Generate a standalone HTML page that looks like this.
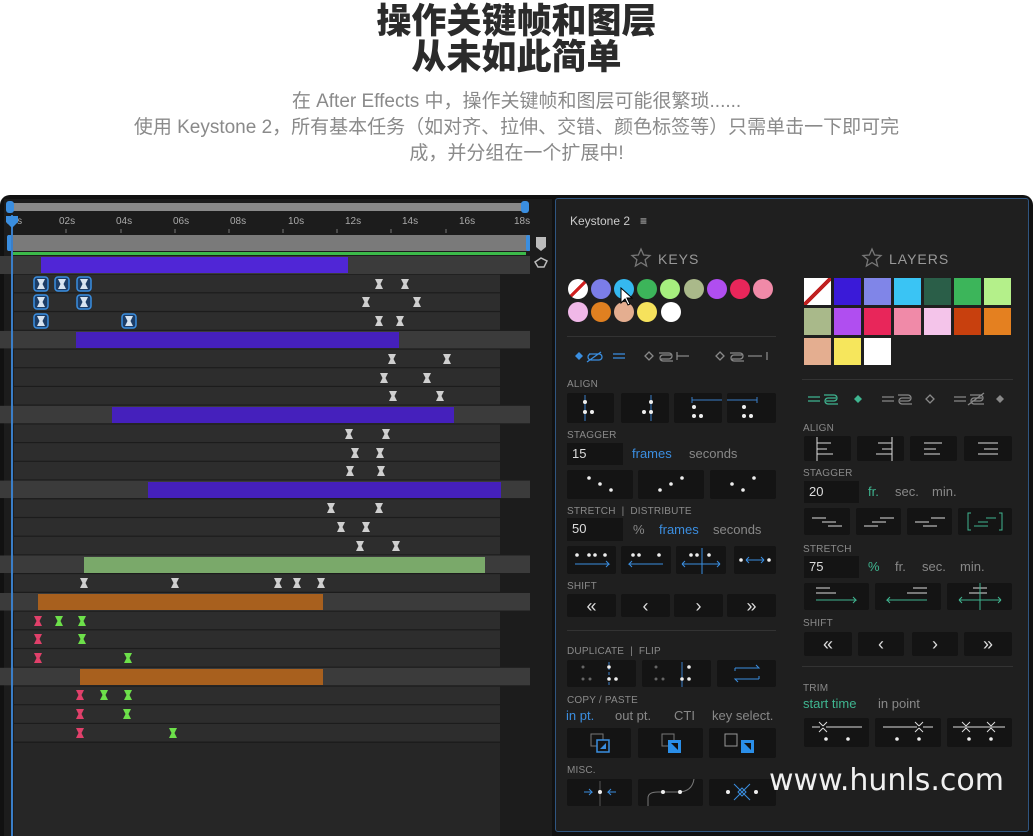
<!DOCTYPE html>
<html><head><meta charset="utf-8">
<style>
*{margin:0;padding:0;box-sizing:border-box}
body{width:1033px;height:836px;background:#fff;position:relative;overflow:hidden;font-family:"Liberation Sans","Noto Sans CJK SC",sans-serif}
.a{position:absolute}
.h{left:0;width:1033px;text-align:center;font-weight:900;font-size:35px;color:#2b2b2b;line-height:38px;font-family:"Noto Sans CJK SC",sans-serif}
.s{left:0;width:1033px;text-align:center;font-size:19px;color:#8a8a8a;line-height:26px;font-family:"Liberation Sans Narrow","Liberation Sans","Noto Sans CJK SC",sans-serif}
.lbl{font-size:10px;color:#8a8a8a;letter-spacing:.2px}
.b{position:absolute;background:#141414;border-radius:2px}
.b svg{position:absolute;left:0;top:0;width:100%;height:100%}
.inp{position:absolute;background:#141414;color:#ddd;font-size:13px;padding:3px 0 0 5px}
.t{position:absolute;font-size:13px;color:#888}
.bl{color:#3b8ee0}.gr{color:#3fb590}
.c{position:absolute;width:20px;height:20px;border-radius:50%}
.q{position:absolute;width:27px;height:27px}
.sh{font-size:18px;color:#ddd;text-align:center;line-height:24px}
</style></head><body>
<div class="a h" style="top:0">操作关键帧和图层</div>
<div class="a h" style="top:36px">从未如此简单</div>
<div class="a s" style="top:89px">在 After Effects 中，操作关键帧和图层可能很繁琐......</div>
<div class="a s" style="top:115px">使用 Keystone 2，所有基本任务（如对齐、拉伸、交错、颜色标签等）只需单击一下即可完</div>
<div class="a s" style="top:141px">成，并分组在一个扩展中!</div>

<div class="a" style="left:0;top:195px;width:1033px;height:641px;background:#111;border-radius:10px 10px 0 0"></div>

<svg class="a" style="left:0;top:0" width="552" height="836" viewBox="0 0 552 836">
<defs>
<path id="k" d="M-4,-5h8l-2.5,5l2.5,5h-8l2.5,-5z" fill="#cfcfcf"/>
<g id="kb"><rect x="-7" y="-7" width="14" height="14" rx="3" fill="#1d3d66" stroke="#3a8ee0" stroke-width="1.5"/><path d="M-4,-5h8l-2.5,5l2.5,5h-8l2.5,-5z" fill="#d8e4f0"/></g>
<path id="kp" d="M-4,-5h8l-2.5,5l2.5,5h-8l2.5,-5z" fill="#e0406a"/>
<path id="kg" d="M-4,-5h8l-2.5,5l2.5,5h-8l2.5,-5z" fill="#6de04a"/>
</defs>
<rect x="4" y="199" width="548" height="637" fill="#1c1c1c"/>
<rect x="10" y="203" width="515" height="8" fill="#8a8a8a"/>
<rect x="6" y="201" width="8" height="12" rx="3" fill="#3a8ee0"/><rect x="521" y="201" width="8" height="12" rx="3" fill="#3a8ee0"/>
<g font-size="10" fill="#aaa" font-family="Liberation Sans">
<text x="6" y="224">00s</text><text x="59" y="224">02s</text><text x="116" y="224">04s</text><text x="173" y="224">06s</text><text x="230" y="224">08s</text><text x="288" y="224">10s</text><text x="345" y="224">12s</text><text x="402" y="224">14s</text><text x="459" y="224">16s</text><text x="514" y="224">18s</text>
</g>
<g stroke="#777"><path d="M66 229v4M121 229v4M175 229v4M229 229v4M283 229v4M337 229v4M391 229v4M446 229v4"/></g>
<rect x="8" y="235" width="522" height="16" fill="#7a7a7a"/>
<rect x="7" y="235" width="5" height="16" rx="2" fill="#3a8ee0"/><rect x="526" y="235" width="4" height="16" rx="2" fill="#3a8ee0"/>
<rect x="12" y="252" width="514" height="3" fill="#3cba4a"/>
<path d="M536 237h10v10l-5 4-5-4z" fill="#bbb"/>
<path d="M535 262l6-4 6 3-3 6h-6z" fill="none" stroke="#bbb" stroke-width="1.5"/>
<g>
<rect x="0" y="256" width="530" height="18" fill="#3b3b3b"/>
<rect x="14" y="274.7" width="486" height="17.5" fill="#2d2d2d"/>
<rect x="14" y="293.4" width="486" height="17.5" fill="#2d2d2d"/>
<rect x="14" y="312.2" width="486" height="17.5" fill="#2d2d2d"/>
<rect x="0" y="330.9" width="530" height="17.5" fill="#3b3b3b"/>
<rect x="14" y="349.6" width="486" height="17.5" fill="#2d2d2d"/>
<rect x="14" y="368.3" width="486" height="17.5" fill="#2d2d2d"/>
<rect x="14" y="387" width="486" height="17.5" fill="#2d2d2d"/>
<rect x="0" y="405.8" width="530" height="17.5" fill="#3b3b3b"/>
<rect x="14" y="424.5" width="486" height="17.5" fill="#2d2d2d"/>
<rect x="14" y="443.2" width="486" height="17.5" fill="#2d2d2d"/>
<rect x="14" y="461.9" width="486" height="17.5" fill="#2d2d2d"/>
<rect x="0" y="480.6" width="530" height="17.5" fill="#3b3b3b"/>
<rect x="14" y="499.4" width="486" height="17.5" fill="#2d2d2d"/>
<rect x="14" y="518.1" width="486" height="17.5" fill="#2d2d2d"/>
<rect x="14" y="536.8" width="486" height="17.5" fill="#2d2d2d"/>
<rect x="0" y="555.5" width="530" height="17.5" fill="#3b3b3b"/>
<rect x="14" y="574.2" width="486" height="17.5" fill="#2d2d2d"/>
<rect x="0" y="593" width="530" height="17.5" fill="#3b3b3b"/>
<rect x="14" y="611.7" width="486" height="17.5" fill="#2d2d2d"/>
<rect x="14" y="630.4" width="486" height="17.5" fill="#2d2d2d"/>
<rect x="14" y="649.1" width="486" height="17.5" fill="#2d2d2d"/>
<rect x="0" y="667.8" width="530" height="17.5" fill="#3b3b3b"/>
<rect x="14" y="686.6" width="486" height="17.5" fill="#2d2d2d"/>
<rect x="14" y="705.3" width="486" height="17.5" fill="#2d2d2d"/>
<rect x="14" y="724" width="486" height="17.5" fill="#2d2d2d"/>
<rect x="14" y="743" width="486" height="93" fill="#262626"/>
</g>
<rect x="41" y="257" width="307" height="16" fill="#5026d6"/>
<rect x="76" y="332" width="323" height="16" fill="#4520bc"/>
<rect x="112" y="407" width="342" height="16" fill="#4520bc"/>
<rect x="148" y="482" width="353" height="16" fill="#4520bc"/>
<rect x="84" y="557" width="401" height="16" fill="#7aa96a"/>
<rect x="38" y="594" width="285" height="16" fill="#a8601e"/>
<rect x="80" y="669" width="243" height="16" fill="#a8601e"/>
<rect x="11" y="215" width="2" height="621" fill="#3a7ec8"/>
<path d="M6 216h12v6l-6 6-6-6z" fill="#3a8ee0"/>
<use href="#kb" x="41" y="284"/><use href="#kb" x="62" y="284"/><use href="#kb" x="84" y="284"/><use href="#k" x="379" y="284"/><use href="#k" x="405" y="284"/>
<use href="#kb" x="41" y="302"/><use href="#kb" x="84" y="302"/><use href="#k" x="366" y="302"/><use href="#k" x="417" y="302"/>
<use href="#kb" x="41" y="321"/><use href="#kb" x="129" y="321"/><use href="#k" x="379" y="321"/><use href="#k" x="400" y="321"/>
<use href="#k" x="392" y="359"/><use href="#k" x="447" y="359"/>
<use href="#k" x="384" y="378"/><use href="#k" x="427" y="378"/>
<use href="#k" x="393" y="396"/><use href="#k" x="440" y="396"/>
<use href="#k" x="349" y="434"/><use href="#k" x="386" y="434"/>
<use href="#k" x="355" y="453"/><use href="#k" x="380" y="453"/>
<use href="#k" x="350" y="471"/><use href="#k" x="381" y="471"/>
<use href="#k" x="331" y="508"/><use href="#k" x="379" y="508"/>
<use href="#k" x="341" y="527"/><use href="#k" x="366" y="527"/>
<use href="#k" x="360" y="546"/><use href="#k" x="396" y="546"/>
<use href="#k" x="84" y="583"/><use href="#k" x="175" y="583"/><use href="#k" x="278" y="583"/><use href="#k" x="297" y="583"/><use href="#k" x="321" y="583"/>
<use href="#kp" x="38" y="621"/><use href="#kg" x="59" y="621"/><use href="#kg" x="82" y="621"/>
<use href="#kp" x="38" y="639"/><use href="#kg" x="82" y="639"/>
<use href="#kp" x="38" y="658"/><use href="#kg" x="128" y="658"/>
<use href="#kp" x="80" y="695"/><use href="#kg" x="104" y="695"/><use href="#kg" x="128" y="695"/>
<use href="#kp" x="80" y="714"/><use href="#kg" x="127" y="714"/>
<use href="#kp" x="80" y="733"/><use href="#kg" x="173" y="733"/>
</svg>

<div class="a" style="left:555px;top:198px;width:474px;height:634px;background:#1f1f1f;border:1px solid #2f5580;border-radius:3px"></div>
<div class="a" style="left:570px;top:214px;font-size:12px;color:#ccc">Keystone 2 &nbsp; ≡</div>
<svg class="a" style="left:630px;top:247px" width="22" height="22" viewBox="0 0 22 22"><path d="M11 2l2.6 6 6.4.5-4.9 4.2 1.5 6.3L11 15.6 5.4 19l1.5-6.3L2 8.5 8.4 8z" fill="none" stroke="#777" stroke-width="1.3"/></svg>
<div class="a" style="left:658px;top:251px;font-size:14px;color:#999;letter-spacing:1px">KEYS</div>
<svg class="a" style="left:861px;top:247px" width="22" height="22" viewBox="0 0 22 22"><path d="M11 2l2.6 6 6.4.5-4.9 4.2 1.5 6.3L11 15.6 5.4 19l1.5-6.3L2 8.5 8.4 8z" fill="none" stroke="#777" stroke-width="1.3"/></svg>
<div class="a" style="left:889px;top:251px;font-size:14px;color:#999;letter-spacing:1px">LAYERS</div>

<div class="c" style="left:568px;top:279px;background:linear-gradient(135deg,#fff 44%,#d02020 44%,#d02020 56%,#fff 56%)"></div>
<div class="c" style="left:591px;top:279px;background:#7b7de8"></div>
<div class="c" style="left:614px;top:279px;background:#35b8f0"></div>
<div class="c" style="left:637px;top:279px;background:#3cb55a"></div>
<div class="c" style="left:660px;top:279px;background:#a6ef7e"></div>
<div class="c" style="left:684px;top:279px;background:#aab98a"></div>
<div class="c" style="left:707px;top:279px;background:#b04ef0"></div>
<div class="c" style="left:730px;top:279px;background:#e8265a"></div>
<div class="c" style="left:753px;top:279px;background:#f08aa8"></div>
<div class="c" style="left:568px;top:302px;background:#f0b8e8"></div>
<div class="c" style="left:591px;top:302px;background:#e08020"></div>
<div class="c" style="left:614px;top:302px;background:#e4ae90"></div>
<div class="c" style="left:637px;top:302px;background:#f6e25c"></div>
<div class="c" style="left:661px;top:302px;background:#fff"></div>
<svg class="a" style="left:620px;top:287px" width="14" height="20" viewBox="0 0 14 20"><path d="M1 1v15l4-4 3 6 2-1-3-6h5z" fill="#fff" stroke="#000"/></svg>

<div class="q" style="left:804px;top:278px;background:linear-gradient(135deg,#fff 45%,#c02020 45%,#c02020 55%,#fff 55%)"></div>
<div class="q" style="left:834px;top:278px;background:#3a1ad8"></div>
<div class="q" style="left:864px;top:278px;background:#8085e8"></div>
<div class="q" style="left:894px;top:278px;background:#3ac4f4"></div>
<div class="q" style="left:924px;top:278px;background:#2a5e48"></div>
<div class="q" style="left:954px;top:278px;background:#3cb55a"></div>
<div class="q" style="left:984px;top:278px;background:#b4f08a"></div>
<div class="q" style="left:804px;top:308px;background:#a9b98a"></div>
<div class="q" style="left:834px;top:308px;background:#b04ef0"></div>
<div class="q" style="left:864px;top:308px;background:#e8265a"></div>
<div class="q" style="left:894px;top:308px;background:#f08aa8"></div>
<div class="q" style="left:924px;top:308px;background:#f4c4ea"></div>
<div class="q" style="left:954px;top:308px;background:#c8400e"></div>
<div class="q" style="left:984px;top:308px;background:#e48020"></div>
<div class="q" style="left:804px;top:338px;background:#e4ae90"></div>
<div class="q" style="left:834px;top:338px;background:#f6e65c"></div>
<div class="q" style="left:864px;top:338px;background:#fff"></div>

<div class="a" style="left:567px;top:336px;width:209px;height:1px;background:#333"></div>
<div class="a" style="left:802px;top:379px;width:211px;height:1px;background:#333"></div>
<div class="a" style="left:567px;top:630px;width:209px;height:1px;background:#333"></div>
<div class="a" style="left:802px;top:666px;width:211px;height:1px;background:#333"></div>

<svg class="a" style="left:567px;top:346px" width="210" height="20" viewBox="0 0 210 20" fill="none" stroke-width="1.3">
<path d="M12 6l4 4-4 4-4-4z" fill="#3a8ee0"/><g stroke="#3a8ee0"><path d="M22 8h10a3 3 0 010 6h-8a3 3 0 010-6M20 16l14-10M46 8h12M46 12h12"/></g>
<g stroke="#888"><path d="M82 6l4 4-4 4-4-4zM92 7h10a3 3 0 010 6h-8M104 9h-8a3 3 0 000 6h10M110 10h12M110 6v8"/>
<path d="M153 6l4 4-4 4-4-4zM163 7h10a3 3 0 010 6h-8M175 9h-8a3 3 0 000 6h10M181 10h14M200 6v8"/></g>
</svg>
<svg class="a" style="left:804px;top:389px" width="210" height="20" viewBox="0 0 210 20" fill="none" stroke-width="1.3">
<g stroke="#3fb590"><path d="M4 8h12M4 12h12M20 6h10a3 3 0 010 6h-8M32 9h-8a3 3 0 000 6h10"/></g><path d="M54 6l4 4-4 4-4-4z" fill="#3fb590"/>
<g stroke="#888"><path d="M78 8h12M78 12h12M94 6h10a3 3 0 010 6h-8M106 9h-8a3 3 0 000 6h10M126 6l4 4-4 4-4-4zM150 8h12M150 12h12M166 6h10a3 3 0 010 6h-8M178 9h-8a3 3 0 000 6h10M164 16l16-12"/></g><path d="M196 6l4 4-4 4-4-4z" fill="#888"/>
</svg>

<div class="a lbl" style="left:567px;top:379px">ALIGN</div>
<div class="b" style="left:567px;top:393px;width:47px;height:30px"><svg viewBox="0 0 47 30"><path d="M18 2v26" stroke="#3a7ec8"/><g fill="#eee"><circle cx="18" cy="9" r="2"/><circle cx="18" cy="19" r="2"/><circle cx="25" cy="19" r="2"/></g></svg></div>
<div class="b" style="left:621px;top:393px;width:48px;height:30px"><svg viewBox="0 0 48 30"><path d="M30 2v26" stroke="#3a7ec8"/><g fill="#eee"><circle cx="30" cy="9" r="2"/><circle cx="30" cy="19" r="2"/><circle cx="23" cy="19" r="2"/></g></svg></div>
<div class="b" style="left:674px;top:393px;width:48px;height:30px"><svg viewBox="0 0 48 30"><path d="M18 7h32M18 4v6" stroke="#3a7ec8"/><g fill="#eee"><circle cx="20" cy="14" r="2"/><circle cx="20" cy="23" r="2"/><circle cx="27" cy="23" r="2"/></g></svg></div>
<div class="b" style="left:727px;top:393px;width:49px;height:30px"><svg viewBox="0 0 49 30"><path d="M0 7h30M30 4v6" stroke="#3a7ec8"/><g fill="#eee"><circle cx="17" cy="14" r="2"/><circle cx="17" cy="23" r="2"/><circle cx="24" cy="23" r="2"/></g></svg></div>

<div class="a lbl" style="left:567px;top:430px">STAGGER</div>
<div class="inp" style="left:567px;top:443px;width:56px;height:22px">15</div>
<div class="t bl" style="left:632px;top:446px">frames</div>
<div class="t" style="left:689px;top:446px">seconds</div>
<div class="b" style="left:567px;top:470px;width:66px;height:29px"><svg viewBox="0 0 66 29"><g fill="#eee"><circle cx="22" cy="8" r="1.8"/><circle cx="33" cy="14" r="1.8"/><circle cx="44" cy="20" r="1.8"/></g></svg></div>
<div class="b" style="left:638px;top:470px;width:66px;height:29px"><svg viewBox="0 0 66 29"><g fill="#eee"><circle cx="22" cy="20" r="1.8"/><circle cx="33" cy="14" r="1.8"/><circle cx="44" cy="8" r="1.8"/></g></svg></div>
<div class="b" style="left:710px;top:470px;width:66px;height:29px"><svg viewBox="0 0 66 29"><g fill="#eee"><circle cx="22" cy="14" r="1.8"/><circle cx="33" cy="20" r="1.8"/><circle cx="44" cy="8" r="1.8"/></g></svg></div>

<div class="a lbl" style="left:567px;top:506px">STRETCH &nbsp;| &nbsp;DISTRIBUTE</div>
<div class="inp" style="left:567px;top:518px;width:56px;height:23px">50</div>
<div class="t" style="left:633px;top:522px">%</div>
<div class="t bl" style="left:659px;top:522px">frames</div>
<div class="t" style="left:713px;top:522px">seconds</div>
<div class="b" style="left:567px;top:546px;width:49px;height:28px"><svg viewBox="0 0 49 28"><g fill="#eee"><circle cx="10" cy="9" r="1.8"/><circle cx="22" cy="9" r="1.8"/><circle cx="28" cy="9" r="1.8"/><circle cx="38" cy="9" r="1.8"/></g><path d="M8 18h34l-3-3M42 18l-3 3" stroke="#3a8ee0" fill="none"/></svg></div>
<div class="b" style="left:621px;top:546px;width:50px;height:28px"><svg viewBox="0 0 50 28"><g fill="#eee"><circle cx="12" cy="9" r="1.8"/><circle cx="18" cy="9" r="1.8"/><circle cx="38" cy="9" r="1.8"/></g><path d="M42 18H8l3-3M8 18l3 3" stroke="#3a8ee0" fill="none"/></svg></div>
<div class="b" style="left:676px;top:546px;width:50px;height:28px"><svg viewBox="0 0 50 28"><g fill="#eee"><circle cx="15" cy="9" r="1.8"/><circle cx="21" cy="9" r="1.8"/><circle cx="33" cy="9" r="1.8"/></g><path d="M26 2v26M6 18h38M6 18l3-3M6 18l3 3M44 18l-3-3M44 18l-3 3" stroke="#3a8ee0" fill="none"/></svg></div>
<div class="b" style="left:734px;top:546px;width:42px;height:28px"><svg viewBox="0 0 42 28"><g fill="#eee"><circle cx="7" cy="14" r="1.8"/><circle cx="35" cy="14" r="1.8"/></g><path d="M12 14h18M12 14l3-3M12 14l3 3M30 14l-3-3M30 14l-3 3" stroke="#3a8ee0" fill="none"/></svg></div>

<div class="a lbl" style="left:567px;top:581px">SHIFT</div>
<div class="b sh" style="left:567px;top:594px;width:49px;height:23px">«</div>
<div class="b sh" style="left:621px;top:594px;width:49px;height:23px">‹</div>
<div class="b sh" style="left:674px;top:594px;width:49px;height:23px">›</div>
<div class="b sh" style="left:727px;top:594px;width:49px;height:23px">»</div>

<div class="a lbl" style="left:567px;top:646px">DUPLICATE &nbsp;| &nbsp;FLIP</div>
<div class="b" style="left:567px;top:660px;width:69px;height:27px"><svg viewBox="0 0 69 27"><path d="M42 2v25" stroke="#3a7ec8" stroke-dasharray="3 2"/><g fill="#666"><circle cx="16" cy="7" r="1.5"/><circle cx="16" cy="19" r="1.5"/><circle cx="23" cy="19" r="1.5"/></g><g fill="#eee"><circle cx="42" cy="7" r="1.8"/><circle cx="42" cy="19" r="1.8"/><circle cx="49" cy="19" r="1.8"/></g></svg></div>
<div class="b" style="left:642px;top:660px;width:69px;height:27px"><svg viewBox="0 0 69 27"><path d="M40 2v25" stroke="#3a7ec8"/><g fill="#666"><circle cx="14" cy="7" r="1.5"/><circle cx="14" cy="19" r="1.5"/><circle cx="21" cy="19" r="1.5"/></g><g fill="#eee"><circle cx="47" cy="7" r="1.8"/><circle cx="40" cy="19" r="1.8"/><circle cx="47" cy="19" r="1.8"/></g></svg></div>
<div class="b" style="left:717px;top:660px;width:59px;height:27px"><svg viewBox="0 0 59 27"><path d="M18 8h24l-3-3M18 8v3M42 19H18l3 3M42 19v-3" stroke="#3a8ee0" fill="none"/></svg></div>

<div class="a lbl" style="left:567px;top:695px">COPY / PASTE</div>
<div class="t bl" style="left:566px;top:708px">in pt.</div>
<div class="t" style="left:615px;top:708px">out pt.</div>
<div class="t" style="left:674px;top:708px">CTI</div>
<div class="t" style="left:712px;top:708px">key select.</div>
<div class="b" style="left:567px;top:728px;width:64px;height:30px"><svg viewBox="0 0 64 30"><rect x="24" y="6" width="12" height="12" fill="none" stroke="#777"/><rect x="30" y="12" width="12" height="12" fill="#141414" stroke="#3a8ee0" stroke-width="1.5"/><path d="M39 15v6h-6z" fill="#3a8ee0"/></svg></div>
<div class="b" style="left:638px;top:728px;width:65px;height:30px"><svg viewBox="0 0 65 30"><rect x="24" y="6" width="12" height="12" fill="none" stroke="#777"/><rect x="30" y="12" width="13" height="13" fill="#2a8ee8"/><path d="M33 15h7v7z" fill="#111"/></svg></div>
<div class="b" style="left:709px;top:728px;width:67px;height:30px"><svg viewBox="0 0 67 30"><rect x="16" y="6" width="12" height="12" fill="none" stroke="#999"/><rect x="32" y="12" width="13" height="13" fill="#2a8ee8"/><path d="M35 15h7v7z" fill="#111"/></svg></div>

<div class="a lbl" style="left:567px;top:765px">MISC.</div>
<div class="b" style="left:567px;top:779px;width:65px;height:27px"><svg viewBox="0 0 65 27"><path d="M33 2v25" stroke="#555"/><path d="M17 13h8l-3-3M25 13l-3 3M49 13h-8l3-3M41 13l3 3" stroke="#3a8ee0" fill="none"/><circle cx="33" cy="13" r="2" fill="#eee"/></svg></div>
<div class="b" style="left:638px;top:779px;width:65px;height:27px"><svg viewBox="0 0 65 27"><path d="M10 27v-8q0-6 10-6h20q14 0 16-13" stroke="#777" fill="none"/><circle cx="25" cy="13" r="2" fill="#eee"/><circle cx="42" cy="13" r="2" fill="#eee"/></svg></div>
<div class="b" style="left:709px;top:779px;width:67px;height:27px"><svg viewBox="0 0 67 27"><path d="M25 5l16 16M41 5L25 21" stroke="#3a8ee0"/><path d="M33 9l4 4-4 4-4-4z" fill="none" stroke="#3a8ee0"/><circle cx="19" cy="13" r="2" fill="#eee"/><circle cx="47" cy="13" r="2" fill="#eee"/></svg></div>

<div class="a lbl" style="left:803px;top:423px">ALIGN</div>
<div class="b" style="left:804px;top:436px;width:47px;height:25px"><svg viewBox="0 0 47 25"><path d="M13 1v24M13 7h14M13 13h10M13 18h16" stroke="#ddd" fill="none"/></svg></div>
<div class="b" style="left:857px;top:436px;width:47px;height:25px"><svg viewBox="0 0 47 25"><path d="M35 1v24M21 7h14M25 13h10M19 18h16" stroke="#ddd" fill="none"/></svg></div>
<div class="b" style="left:910px;top:436px;width:47px;height:25px"><svg viewBox="0 0 47 25"><path d="M14 7h18M14 13h12M14 18h16" stroke="#ddd" fill="none"/></svg></div>
<div class="b" style="left:964px;top:436px;width:48px;height:25px"><svg viewBox="0 0 48 25"><path d="M14 7h20M20 13h14M14 18h20" stroke="#ddd" fill="none"/></svg></div>

<div class="a lbl" style="left:803px;top:468px">STAGGER</div>
<div class="inp" style="left:804px;top:481px;width:55px;height:22px">20</div>
<div class="t gr" style="left:868px;top:484px">fr.</div>
<div class="t" style="left:895px;top:484px">sec.</div>
<div class="t" style="left:932px;top:484px">min.</div>
<div class="b" style="left:804px;top:508px;width:46px;height:27px"><svg viewBox="0 0 46 27"><path d="M8 10h14M18 14h14M24 18h14" stroke="#ddd"/></svg></div>
<div class="b" style="left:856px;top:508px;width:45px;height:27px"><svg viewBox="0 0 45 27"><path d="M24 10h14M16 14h14M8 18h14" stroke="#ddd"/></svg></div>
<div class="b" style="left:907px;top:508px;width:45px;height:27px"><svg viewBox="0 0 45 27"><path d="M24 10h14M8 14h14M16 18h14" stroke="#ddd"/></svg></div>
<div class="b" style="left:958px;top:508px;width:54px;height:27px"><svg viewBox="0 0 54 27"><path d="M13 5h-3v17h3M41 5h3v17h-3M28 10h10M20 14h10M16 18h14" stroke="#3fb590" fill="none"/></svg></div>

<div class="a lbl" style="left:803px;top:544px">STRETCH</div>
<div class="inp" style="left:804px;top:556px;width:55px;height:22px">75</div>
<div class="t gr" style="left:868px;top:559px">%</div>
<div class="t" style="left:895px;top:559px">fr.</div>
<div class="t" style="left:922px;top:559px">sec.</div>
<div class="t" style="left:960px;top:559px">min.</div>
<div class="b" style="left:804px;top:583px;width:65px;height:27px"><svg viewBox="0 0 65 27"><path d="M12 5h14M12 10h20" stroke="#ddd"/><path d="M12 17h40l-3-3M52 17l-3 3" stroke="#3fb590" fill="none"/></svg></div>
<div class="b" style="left:875px;top:583px;width:66px;height:27px"><svg viewBox="0 0 66 27"><path d="M38 5h14M32 10h20" stroke="#ddd"/><path d="M52 17H12l3-3M12 17l3 3" stroke="#3fb590" fill="none"/></svg></div>
<div class="b" style="left:947px;top:583px;width:65px;height:27px"><svg viewBox="0 0 65 27"><path d="M26 5h14M22 10h18" stroke="#ddd"/><path d="M33 0v27M12 17h42M12 17l3-3M12 17l3 3M54 17l-3-3M54 17l-3 3" stroke="#3fb590" fill="none"/></svg></div>

<div class="a lbl" style="left:803px;top:618px">SHIFT</div>
<div class="b sh" style="left:804px;top:632px;width:48px;height:24px">«</div>
<div class="b sh" style="left:858px;top:632px;width:46px;height:24px">‹</div>
<div class="b sh" style="left:912px;top:632px;width:46px;height:24px">›</div>
<div class="b sh" style="left:964px;top:632px;width:48px;height:24px">»</div>

<div class="a lbl" style="left:803px;top:683px">TRIM</div>
<div class="t gr" style="left:803px;top:696px">start time</div>
<div class="t" style="left:878px;top:696px">in point</div>
<div class="b" style="left:804px;top:718px;width:65px;height:29px"><svg viewBox="0 0 65 29"><path d="M15 4l4 4M23 4l-4 4M15 14l4-4M23 14l-4-4M8 9h8M22 9h36" stroke="#ddd" fill="none"/><circle cx="22" cy="21" r="1.8" fill="#eee"/><circle cx="44" cy="21" r="1.8" fill="#eee"/></svg></div>
<div class="b" style="left:875px;top:718px;width:66px;height:29px"><svg viewBox="0 0 66 29"><path d="M40 4l4 4M48 4l-4 4M40 14l4-4M48 14l-4-4M8 9h34M48 9h10" stroke="#ddd" fill="none"/><circle cx="22" cy="21" r="1.8" fill="#eee"/><circle cx="44" cy="21" r="1.8" fill="#eee"/></svg></div>
<div class="b" style="left:947px;top:718px;width:65px;height:29px"><svg viewBox="0 0 65 29"><path d="M15 4l4 4M23 4l-4 4M15 14l4-4M23 14l-4-4M40 4l4 4M48 4l-4 4M40 14l4-4M48 14l-4-4M6 9h52" stroke="#ddd" fill="none"/><circle cx="22" cy="21" r="1.8" fill="#eee"/><circle cx="44" cy="21" r="1.8" fill="#eee"/></svg></div>

<div class="a" style="left:769px;top:763px;font-size:30px;color:#f0f0f0;letter-spacing:0px;font-family:'DejaVu Sans','Liberation Sans',sans-serif">www.hunls.com</div>
</body></html>
